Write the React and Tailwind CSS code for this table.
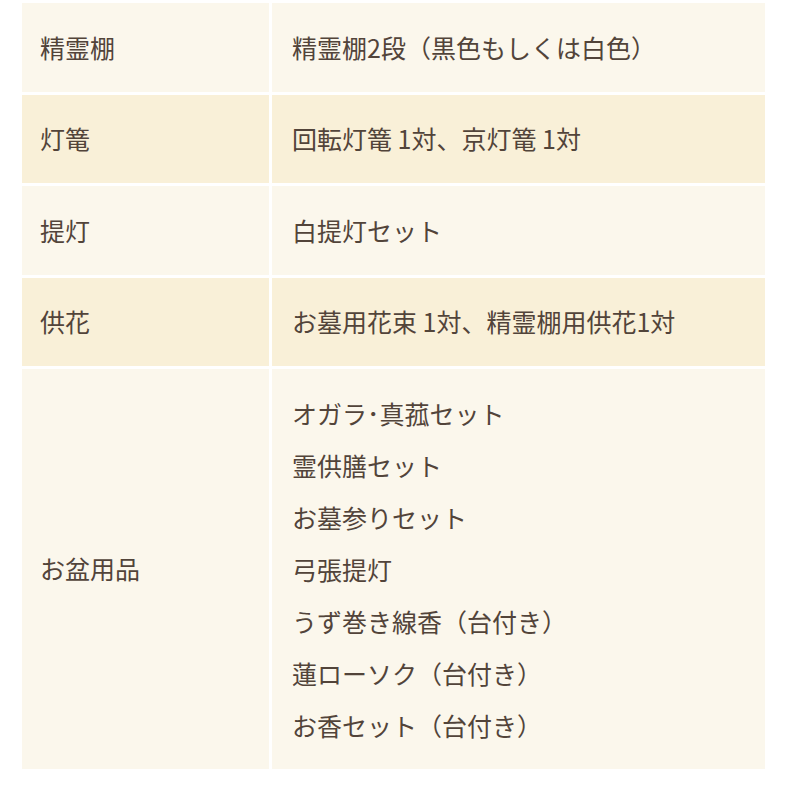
import React from 'react'

const rows = [
  { label: '精霊棚', items: ['精霊棚2段（黒色もしくは白色）'] },
  { label: '灯篭', items: ['回転灯篭 1対、京灯篭 1対'] },
  { label: '提灯', items: ['白提灯セット'] },
  { label: '供花', items: ['お墓用花束 1対、精霊棚用供花1対'] },
  {
    label: 'お盆用品',
    items: [
      'オガラ･真菰セット',
      '霊供膳セット',
      'お墓参りセット',
      '弓張提灯',
      'うず巻き線香（台付き）',
      '蓮ローソク（台付き）',
      'お香セット（台付き）',
    ],
  },
]

const App = () => {
  return (
    <div className="w-[788px] h-[792px] bg-white pt-[3px] pl-[22px] font-['Noto_Sans_CJK_JP','Noto_Sans',sans-serif] text-[#52443a]">
      <div className="w-[743px] flex flex-col gap-[3px]">
        {rows.map((row, index) => {
          const bg = index % 2 === 0 ? 'bg-[#fbf7ec]' : 'bg-[#f9f0d8]'
          const multi = row.items.length > 1
          return (
            <div key={index} className="flex gap-[3px]">
              <div className={`${bg} w-[247px] shrink-0 flex items-center pl-[18px] text-[25px]`}>
                {row.label}
              </div>
              <div
                className={`${bg} flex-1 flex flex-col justify-center pl-[20px] text-[25px] ${
                  multi ? 'py-[18px] leading-[52px]' : 'h-[88.5px]'
                }`}
              >
                {row.items.map((item, i) => (
                  <div key={i}>{item}</div>
                ))}
              </div>
            </div>
          )
        })}
      </div>
    </div>
  )
}

export default App
